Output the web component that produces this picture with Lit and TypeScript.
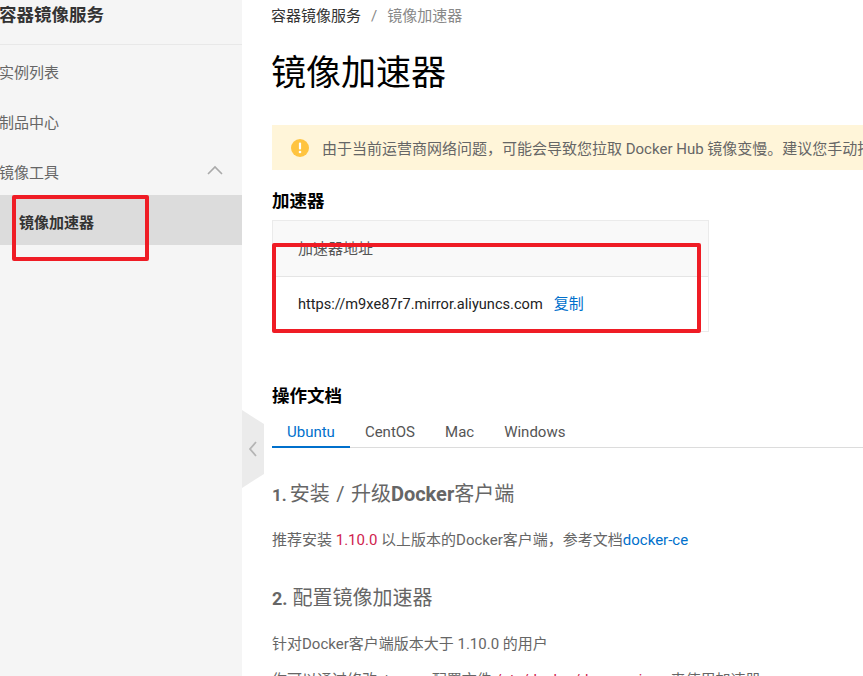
import { LitElement, html, css } from "lit";
import { customElement } from "lit/decorators.js";

@customElement("app-root")
export class AppRoot extends LitElement {
  static styles = css`
    :host {
      display: block;
      width: 863px;
      height: 676px;
      overflow: hidden;
      position: relative;
      background: #fff;
      font-family: "Roboto", "Noto Sans CJK SC", sans-serif;
      font-size: 15px;
      color: #333;
    }
    .page { display: flex; height: 676px; }
    .side {
      flex: none;
      width: 242px;
      background: #f5f5f5;
    }
    .side-title {
      height: 45px;
      box-sizing: border-box;
      border-bottom: 1px solid #e8e8e8;
      margin-left: -1px;
      font-size: 17.5px;
      font-weight: 700;
      line-height: 30px;
      color: #333;
    }
    .item {
      height: 50px;
      box-sizing: border-box;
      padding-top: 3px;
      display: flex;
      align-items: center;
      justify-content: space-between;
      margin-left: -1px;
      color: #666;
      padding-right: 19px;
    }
    .item svg { display: block; margin-top: -3px; }
    .item.active {
      margin-left: 0;
      padding-left: 19px;
      background: #dcdcdc;
      color: #333;
      font-weight: 700;
    }
    .handle {
      position: absolute;
      left: 242px;
      top: 410px;
      width: 22px;
      height: 78px;
      display: flex;
      align-items: center;
      justify-content: center;
      background: #ebebeb;
      clip-path: polygon(0 0, 100% 18%, 100% 82%, 0 100%);
    }
    .main { flex: 1; min-width: 0; padding-left: 30px; overflow: hidden; }
    .crumbs {
      display: flex;
      gap: 10px;
      padding-top: 6px;
      margin-left: -1px;
      line-height: 20px;
      white-space: nowrap;
      color: #333;
    }
    .crumbs .sep, .crumbs .cur { color: #888; }
    h1 {
      margin: 0 0 0 -1px;
      padding-top: 18px;
      font-size: 35px;
      font-weight: 400;
      line-height: 60px;
      color: #000;
    }
    .alert {
      margin-top: 21px;
      height: 45px;
      width: 640px;
      background: #fff5d9;
      display: flex;
      align-items: center;
      gap: 13px;
      padding-left: 19px;
      box-sizing: border-box;
      white-space: nowrap;
      overflow: hidden;
      color: #666;
    }
    .alert svg { flex: none; }
    h3 {
      margin: 0;
      font-size: 17.5px;
      font-weight: 700;
      color: #000;
      line-height: 24px;
    }
    .acc { margin-top: 19px; }
    .table {
      margin-top: 7px;
      width: 437px;
      height: 112px;
      box-sizing: border-box;
      border: 1px solid #ebebeb;
    }
    .th {
      height: 56px;
      box-sizing: border-box;
      background: #f9f9f9;
      border-bottom: 1px solid #e5e5e5;
      padding: 18px 25px 0;
      line-height: 20px;
      color: #555;
    }
    .td {
      display: flex;
      gap: 11px;
      padding: 17px 25px 0;
      line-height: 20px;
      color: #222;
    }
    .url { font-size: 14.6px; }
    a { color: #0070cc; text-decoration: none; }
    .docs { margin-top: 52px; }
    .tabs {
      display: flex;
      border-bottom: 1px solid #dcdcdc;
      height: 40px;
      box-sizing: border-box;
    }
    .tab {
      padding: 0 15px;
      line-height: 48px;
      color: #555;
    }
    .tab.on {
      color: #0070cc;
      height: 40px;
      box-sizing: border-box;
      border-bottom: 2px solid #0070cc;
    }
    h2 {
      margin: 0;
      height: 30px;
      font-size: 20px;
      font-weight: 400;
      line-height: 30px;
      color: #666;
      white-space: nowrap;
    }
    h2 b { font-weight: 700; }
    h2 .n1 { font-size: 17px; margin-right: 3px; }
    h2 .n2 { font-size: 18px; margin-right: 5px; }
    h2 .sl { margin: 0 1.5px; }
    .h1st { margin-top: 31px; }
    p { margin: 0; height: 20px; line-height: 20px; color: #666; white-space: nowrap; }
    .p1 { margin-top: 21px; }
    .h2nd { margin-top: 33px; }
    .p2 { margin-top: 21px; }
    .p3 { margin-top: 16px; }
    .dm { font-size: 13px; }
    .red { color: #d0234e; }
    .mark {
      position: absolute;
      box-sizing: border-box;
      border: 4px solid #ef1c25;
      border-radius: 2px;
    }
    .m1 { left: 12px; top: 195px; width: 137px; height: 66px; }
    .m2 { left: 272px; top: 243px; width: 429px; height: 90px; }
  `;

  render() {
    return html`
      <div class="page">
        <nav class="side">
          <div class="side-title">容器镜像服务</div>
          <div class="item">实例列表</div>
          <div class="item">制品中心</div>
          <div class="item">
            <span>镜像工具</span>
            <svg width="16" height="10" viewBox="0 0 16 10" fill="none" stroke="#aaa" stroke-width="1.6"><path d="M1 9l7-7 7 7"/></svg>
          </div>
          <div class="item active">镜像加速器</div>
        </nav>
        <main class="main">
          <div class="crumbs"><span>容器镜像服务</span><span class="sep">/</span><span class="cur">镜像加速器</span></div>
          <h1>镜像加速器</h1>
          <div class="alert">
            <svg width="18" height="18" viewBox="0 0 18 18"><circle cx="9" cy="9" r="9" fill="#ffc440"/><rect x="7.9" y="3.6" width="2.2" height="7" rx="1" fill="#fff"/><circle cx="9" cy="13" r="1.3" fill="#fff"/></svg>
            <span>由于当前运营商网络问题，可能会导致您拉取 Docker Hub 镜像变慢。建议您手动指定镜像加速器地址</span>
          </div>
          <h3 class="acc">加速器</h3>
          <div class="table">
            <div class="th">加速器地址</div>
            <div class="td"><span class="url">https://m9xe87r7.mirror.aliyuncs.com</span><a>复制</a></div>
          </div>
          <h3 class="docs">操作文档</h3>
          <div class="tabs">
            <div class="tab on">Ubuntu</div>
            <div class="tab">CentOS</div>
            <div class="tab">Mac</div>
            <div class="tab">Windows</div>
          </div>
          <h2 class="h1st"><b class="n1">1.</b>安装 <span class="sl">/</span> 升级<b>Docker</b>客户端</h2>
          <p class="p1">推荐安装 <span class="red">1.10.0</span> 以上版本的Docker客户端，参考文档<a>docker-ce</a></p>
          <h2 class="h2nd"><b class="n2">2.</b>配置镜像加速器</h2>
          <p class="p2">针对Docker客户端版本大于 1.10.0 的用户</p>
          <p class="p3">你可以通过修改 <span class="dm">daemon</span> 配置文件 <span class="red">/etc/docker/daemon.json</span> 来使用加速器</p>
        </main>
      </div>
      <div class="handle"><svg width="10" height="16" viewBox="0 0 10 16" fill="none" stroke="#b5b5b5" stroke-width="1.8"><path d="M8 1L2 8l6 7"/></svg></div>
      <div class="mark m1"></div>
      <div class="mark m2"></div>
    `;
  }
}
